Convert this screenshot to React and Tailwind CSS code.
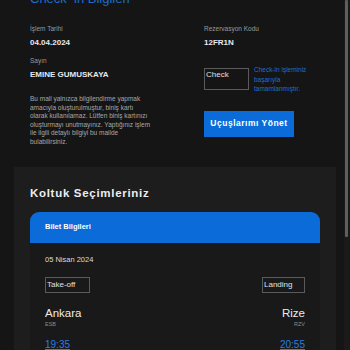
export default function App() {
  return (
    <div className="flex h-[350px] w-[350px] overflow-hidden bg-[#151515] font-['Liberation_Sans',Arial,sans-serif]">
      {/* Page column */}
      <div className="flex-1 flex flex-col">
        {/* Check-in info card */}
        <div className="pl-[30px] pr-[8px]">
          <h1 className="mt-[-9px] text-[13px] leading-[16px] text-[#1b6fd3]">Check–in Bilgileri</h1>

          <div className="mt-[18px] flex">
            <div className="w-[174px]">
              <p className="text-[6.5px] leading-[8px] text-[#9a9a9a]">İşlem Tarihi</p>
              <p className="mt-[5px] text-[8px] leading-[10px] font-bold text-[#e8e8ee]">04.04.2024</p>
              <p className="mt-[9px] text-[6.5px] leading-[8px] text-[#9a9a9a]">Sayın</p>
              <p className="mt-[5px] text-[8px] leading-[10px] font-bold text-[#e8e8ee]">EMINE GUMUSKAYA</p>
              <p className="mt-[15px] text-[6.5px] leading-[8.6px] text-[#a8a8a8]">
                Bu mail yalnızca bilgilendirme yapmak<br />
                amacıyla oluşturulmuştur, biniş kartı<br />
                olarak kullanılamaz. Lütfen biniş kartınızı<br />
                oluşturmayı unutmayınız. Yaptığınız işlem<br />
                ile ilgili detaylı bilgiyi bu mailde<br />
                bulabilirsiniz.
              </p>
            </div>

            <div className="flex-1">
              <p className="text-[6.5px] leading-[8px] text-[#9a9a9a]">Rezervasyon Kodu</p>
              <p className="mt-[5px] text-[8px] leading-[10px] font-bold text-[#e8e8ee]">12FR1N</p>
              <div className="mt-[20px] flex items-start gap-[5px]">
                <div className="w-[45px] h-[22px] border border-[#5a5a5a] px-[1px] text-[8px] leading-[11px] text-[#e0e0e0]">
                  Check
                </div>
                <p className="mt-[-3px] text-[6.5px] leading-[9.5px] text-[#1d6fd0]">
                  Check-in işleminiz<br />
                  başarıyla<br />
                  tamamlanmıştır.
                </p>
              </div>
              <button className="mt-[17px] w-[90px] h-[26px] bg-[#0a6bd9] text-white text-[8.5px] font-bold tracking-[0.5px] flex items-center justify-center">
                Uçuşlarımı Yönet
              </button>
            </div>
          </div>
        </div>

        {/* Seat selection section */}
        <div className="mt-[20px] ml-[14px] w-[322px] flex-1 bg-[#1d1d1d] px-[16px] pt-[19px]">
          <h2 className="text-[11.5px] leading-[14px] font-bold tracking-[0.7px] text-[#ececf2]">Koltuk Seçimleriniz</h2>

          <div className="mt-[12px]">
            <div className="h-[31px] rounded-t-[9px] bg-[#0a6bd9] px-[15px] flex items-center">
              <span className="text-[7.5px] font-semibold text-white">Bilet Bilgileri</span>
            </div>
            <div className="bg-[#191919] px-[15px] pt-[12px] pb-[20px]">
              <p className="text-[7.5px] leading-[10px] text-[#dcdcdc]">05 Nisan 2024</p>
              <div className="mt-[12px] flex justify-between">
                <div className="w-[45px] h-[16px] border border-[#5a5a5a] px-[1px] text-[8px] leading-[13px] text-[#e0e0e0]">Take-off</div>
                <div className="w-[43px] h-[16px] border border-[#5a5a5a] px-[1px] text-[8px] leading-[13px] text-[#e0e0e0]">Landing</div>
              </div>
              <div className="mt-[13px] flex justify-between">
                <div>
                  <p className="text-[11.5px] leading-[14px] text-[#ececec]">Ankara</p>
                  <p className="text-[5.5px] leading-[8px] text-[#8a8a8a]">ESB</p>
                  <p className="mt-[11px] text-[10px] leading-[12px] text-[#2a7de0] underline">19:35</p>
                </div>
                <div className="text-right">
                  <p className="text-[11.5px] leading-[14px] text-[#ececec]">Rize</p>
                  <p className="text-[5.5px] leading-[8px] text-[#8a8a8a]">RZV</p>
                  <p className="mt-[11px] text-[10px] leading-[12px] text-[#2a7de0] underline">20:55</p>
                </div>
              </div>
            </div>
          </div>
        </div>
      </div>

      {/* Scrollbar */}
      <div className="w-[6px] bg-[#1a1a1a] pl-[1px]">
        <div className="w-[3px] h-[237px] bg-[#5e5e5e] rounded-[1px]"></div>
      </div>
    </div>
  );
}
